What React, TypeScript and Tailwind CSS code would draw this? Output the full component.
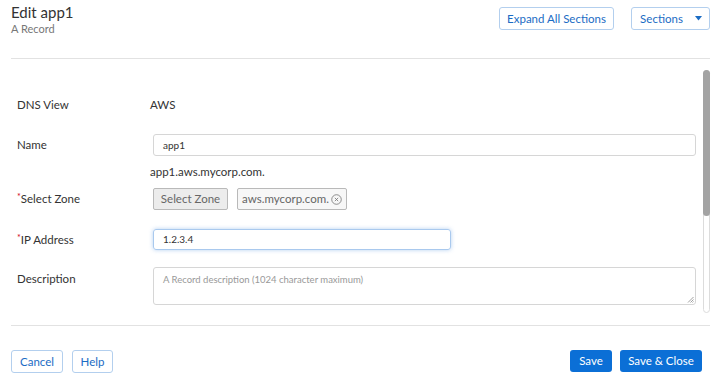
export default function App() {
  const label = "w-[133px] shrink-0 text-[11.5px] text-[#333]";
  const outlineBtn =
    "h-[23px] border border-[#b3cfee] rounded-[3px] bg-white text-[11.5px] text-[#1b6cc4] flex items-center justify-center whitespace-nowrap";

  return (
    <div className="w-[716px] h-[374px] bg-white overflow-hidden font-['Lato','Noto_Sans',sans-serif] text-[#333]">
      {/* header */}
      <div className="h-[59px] ml-[11px] mr-[6px] border-b border-[#e2e2e2] flex justify-between items-start">
        <div className="pt-[3px]">
          <div className="text-[15px] leading-[19px] text-[#333]">Edit app1</div>
          <div className="text-[11px] leading-[14px] text-[#777]">A Record</div>
        </div>
        <div className="flex gap-[17px] pt-[7px]">
          <button className={outlineBtn + " w-[115px] h-[22px]"}>Expand All Sections</button>
          <button className={outlineBtn + " w-[79px] h-[22px] gap-[12px] pl-[1px]"}>
            Sections
            <svg width="7" height="5" viewBox="0 0 7 5">
              <path d="M0 0 H7 L3.5 4.5 Z" fill="#1b6cc4" />
            </svg>
          </button>
        </div>
      </div>

      {/* body */}
      <div className="h-[266px] flex">
        <div className="flex-1 pl-[17px] pt-[35px]">
          <div className="flex items-center h-[22px]">
            <div className={label}>DNS View</div>
            <div className="text-[11.5px] text-[#333]">AWS</div>
          </div>
          <div className="flex items-center h-[22px] mt-[18px]">
            <div className={label}>Name</div>
            <div className="ml-[3px] w-[543px] h-[22px] border border-[#d6d6d6] rounded-[3px] flex items-center px-[9px] text-[10px] text-[#333]">
              app1
            </div>
          </div>
          <div className="flex items-center h-[16px] mt-[8px]">
            <div className="w-[133px] shrink-0" />
            <div className="text-[11.5px] text-[#333]">app1.aws.mycorp.com.</div>
          </div>
          <div className="flex items-center h-[22px] mt-[8px]">
            <div className={label}>
              <span className="text-[#d0021b] text-[9px] align-top">*</span>Select Zone
            </div>
            <button className="ml-[3px] w-[75px] h-[22px] border border-[#b9b9b9] rounded-[2px] bg-[#ececec] text-[11.5px] text-[#666] flex items-center justify-center">
              Select Zone
            </button>
            <div className="ml-[9px] w-[110px] h-[22px] border border-[#b9b9b9] rounded-[2px] bg-[#f7f7f7] text-[11.5px] text-[#666] flex items-center justify-center gap-[2px]">
              aws.mycorp.com.
              <svg width="11" height="11" viewBox="0 0 12 12">
                <circle cx="6" cy="6" r="5.2" fill="none" stroke="#777" strokeWidth="0.9" />
                <path d="M4.2 4.2 L7.8 7.8 M7.8 4.2 L4.2 7.8" stroke="#777" strokeWidth="0.9" />
              </svg>
            </div>
          </div>
          <div className="flex items-center h-[21px] mt-[19px]">
            <div className={label}>
              <span className="text-[#d0021b] text-[9px] align-top">*</span>IP Address
            </div>
            <div className="ml-[3px] w-[298px] h-[21px] border border-[#a9c9ee] rounded-[3px] shadow-[0_0_4px_rgba(90,150,225,0.45)] flex items-center px-[9px] text-[10px] text-[#333]">
              1.2.3.4
            </div>
          </div>
          <div className="flex items-start mt-[17px]">
            <div className={label + " pt-[3px]"}>Description</div>
            <div className="ml-[3px] relative w-[543px] h-[38px] border border-[#d6d6d6] rounded-[3px] px-[9px] pt-[5px] text-[9.5px] text-[#999]">
              A Record description (1024 character maximum)
              <svg className="absolute right-[1px] bottom-[1px]" width="7" height="7" viewBox="0 0 7 7">
                <path d="M6.5 1 L1 6.5 M6.5 3.5 L3.5 6.5 M6.5 5.5 L5.5 6.5" stroke="#888" strokeWidth="0.8" />
              </svg>
            </div>
          </div>
        </div>
        {/* scrollbar */}
        <div className="w-[7px] mr-[6px] mt-[11px] h-[243px] border border-[#dcdcdc] rounded-[4px] relative">
          <div className="absolute -left-px -top-px w-[7px] h-[146px] rounded-[4px] bg-[#a3a3a3]" />
        </div>
      </div>

      {/* footer */}
      <div className="ml-[11px] mr-[6px] border-t border-[#e2e2e2] pt-[24px] flex justify-between pr-[8px]">
        <div className="flex gap-[9px]">
          <button className={outlineBtn + " w-[52px] h-[22px]"}>Cancel</button>
          <button className={outlineBtn + " w-[41px] h-[22px]"}>Help</button>
        </div>
        <div className="flex gap-[8px]">
          <button className="h-[22px] w-[42px] rounded-[3px] bg-[#0b6fd6] text-white text-[11.5px]">Save</button>
          <button className="h-[22px] w-[82px] rounded-[3px] bg-[#0b6fd6] text-white text-[11.5px]">Save &amp; Close</button>
        </div>
      </div>
    </div>
  );
}
